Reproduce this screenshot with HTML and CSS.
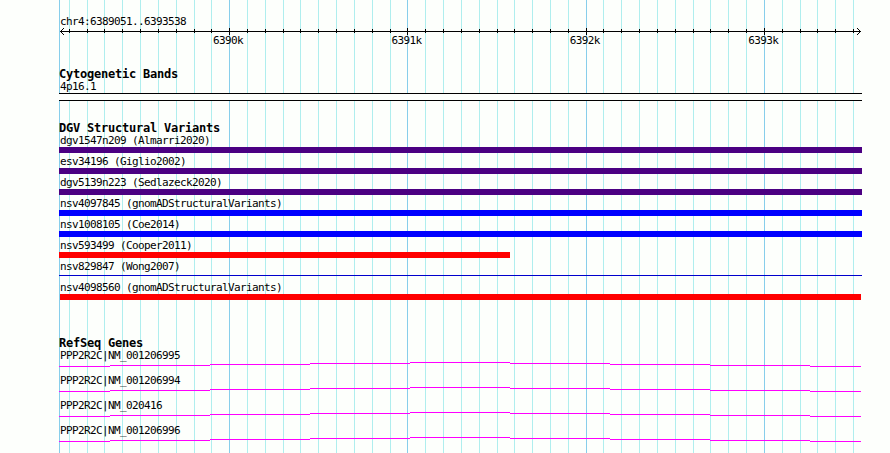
FILE: index.html
```
<!DOCTYPE html>
<html lang="en">
<head>
    <meta charset="UTF-8">
    <title>chr4:6389051..6393538</title>
    <link rel="stylesheet" href="styles.css">
</head>
<body>
    <div class="browser">
        <svg class="gridlines" width="890" height="453" shape-rendering="crispEdges">
            <path class="minor" d="M69.5 0V453M87.5 0V453M104.5 0V453M122.5 0V453M140.5 0V453M158.5 0V453M176.5 0V453M194.5 0V453M211.5 0V453M247.5 0V453M265.5 0V453M283.5 0V453M300.5 0V453M318.5 0V453M336.5 0V453M354.5 0V453M372.5 0V453M390.5 0V453M425.5 0V453M443.5 0V453M461.5 0V453M479.5 0V453M497.5 0V453M514.5 0V453M532.5 0V453M550.5 0V453M568.5 0V453M603.5 0V453M621.5 0V453M639.5 0V453M657.5 0V453M675.5 0V453M693.5 0V453M710.5 0V453M728.5 0V453M746.5 0V453M782.5 0V453M800.5 0V453M817.5 0V453M835.5 0V453M853.5 0V453"/>
            <path class="major" d="M59.5 0V453M229.5 0V453M407.5 0V453M586.5 0V453M764.5 0V453"/>
        </svg>
        <div class="tracks">
            <div class="ruler">
                <div class="label">chr4:6389051..6393538</div>
                <svg class="axis" width="803" height="7" shape-rendering="crispEdges">
                    <path d="M1 3.5H802"/>
                    <path d="M10.5 1V5M28.5 1V5M45.5 1V5M63.5 1V5M81.5 1V5M99.5 1V5M117.5 1V5M135.5 1V5M152.5 1V5M188.5 1V5M206.5 1V5M224.5 1V5M241.5 1V5M259.5 1V5M277.5 1V5M295.5 1V5M313.5 1V5M331.5 1V5M366.5 1V5M384.5 1V5M402.5 1V5M420.5 1V5M438.5 1V5M455.5 1V5M473.5 1V5M491.5 1V5M509.5 1V5M544.5 1V5M562.5 1V5M580.5 1V5M598.5 1V5M616.5 1V5M634.5 1V5M651.5 1V5M669.5 1V5M687.5 1V5M723.5 1V5M741.5 1V5M758.5 1V5M776.5 1V5M794.5 1V5"/>
                    <path d="M170.5 0V7M348.5 0V7M527.5 0V7M705.5 0V7"/>
                    <path d="M4 .5h1M3 1.5h1M2 2.5h1M2 4.5h1M3 5.5h1M4 6.5h1M798 .5h1M799 1.5h1M800 2.5h1M800 4.5h1M799 5.5h1M798 6.5h1"/>
                </svg>
                <div class="ticks">
                    <span>6390k</span>
                    <span>6391k</span>
                    <span>6392k</span>
                    <span>6393k</span>
                </div>
            </div>

            <div class="track">
                <h2>Cytogenetic Bands</h2>
                <div class="label">4p16.1</div>
                <div class="band"></div>
            </div>

            <div class="track variants">
                <h2>DGV Structural Variants</h2>
                <div class="variant">
                    <div class="label">dgv1547n209 (Almarri2020)</div>
                    <div class="bar complex"></div>
                </div>
                <div class="variant">
                    <div class="label">esv34196 (Giglio2002)</div>
                    <div class="bar complex"></div>
                </div>
                <div class="variant">
                    <div class="label">dgv5139n223 (Sedlazeck2020)</div>
                    <div class="bar complex"></div>
                </div>
                <div class="variant">
                    <div class="label">nsv4097845 (gnomADStructuralVariants)</div>
                    <div class="bar gain"></div>
                </div>
                <div class="variant">
                    <div class="label">nsv1008105 (Coe2014)</div>
                    <div class="bar gain"></div>
                </div>
                <div class="variant">
                    <div class="label">nsv593499 (Cooper2011)</div>
                    <div class="bar loss partial"></div>
                </div>
                <div class="variant">
                    <div class="label">nsv829847 (Wong2007)</div>
                    <div class="bar thin"></div>
                </div>
                <div class="variant">
                    <div class="label">nsv4098560 (gnomADStructuralVariants)</div>
                    <div class="bar loss inset"></div>
                </div>
            </div>

            <div class="track genes">
                <h2>RefSeq Genes</h2>
                <div class="gene">
                    <div class="label">PPP2R2C|NM_001206995</div>
                    <svg width="803" height="5" shape-rendering="crispEdges">
                        <path id="intron" d="M0 4.5H51M51 3.5H151M151 2.5H251M251 1.5H351M351 .5H451M451 1.5H551M551 2.5H651M651 3.5H751M751 4.5H802"/>
                    </svg>
                </div>
                <div class="gene">
                    <div class="label">PPP2R2C|NM_001206994</div>
                    <svg width="803" height="5" shape-rendering="crispEdges"><use href="#intron"/></svg>
                </div>
                <div class="gene">
                    <div class="label">PPP2R2C|NM_020416</div>
                    <svg width="803" height="5" shape-rendering="crispEdges"><use href="#intron"/></svg>
                </div>
                <div class="gene">
                    <div class="label">PPP2R2C|NM_001206996</div>
                    <svg width="803" height="5" shape-rendering="crispEdges"><use href="#intron"/></svg>
                </div>
            </div>
        </div>
    </div>
</body>
</html>
```
FILE: styles.css
```
body {
    margin: 0;
    background-color: #fdfffc;
    color: #000000;
    font-family: "DejaVu Sans Mono", monospace;
    font-size: 11px;
    line-height: 13px;
    letter-spacing: -0.62px;
}
.browser {
    position: relative;
    width: 890px;
    height: 453px;
    overflow: hidden;
}
svg {
    display: block;
    fill: none;
}
/* vertical lines behind every track */
.gridlines {
    position: absolute;
    top: 0;
    left: 0;
}
.minor {
    stroke: #afeeee;
}
.major {
    stroke: #87ceeb;
}
.tracks {
    position: relative;
    width: 803px;
    padding: 15px 0 0 59px;
}
.label {
    height: 13px;
    padding-left: 1px;
    white-space: nowrap;
}
.axis {
    stroke: #000000;
}
.ticks {
    display: flex;
    margin-top: -1px;
    padding-left: 154px;
}
.ticks span {
    flex: 0 0 178.4px;
}
.ticks span:last-child {
    flex-basis: 30px;
}
.track {
    margin-top: 20px;
}
.track h2 {
    height: 13px;
    margin: 0;
    font-size: 12px;
    line-height: 14px;
    letter-spacing: -0.22px;
    white-space: nowrap;
}
.band {
    box-sizing: border-box;
    height: 8px;
    border: solid #000000;
    border-width: 1px 0;
    background-color: #fdfffc;
}
.variant {
    height: 21px;
}
.bar {
    height: 6px;
}
.complex {
    background-color: #4b0082;
}
.gain {
    background-color: #0000ff;
}
.loss {
    background-color: #ff0000;
}
.partial {
    width: 451px;
}
.inset {
    margin: 0 1px;
}
.thin {
    height: 1px;
    margin-top: 2px;
    background-color: #0000cd;
}
.genes {
    margin-top: 34px;
}
.gene {
    height: 25px;
    stroke: #ff00ff;
}
```
